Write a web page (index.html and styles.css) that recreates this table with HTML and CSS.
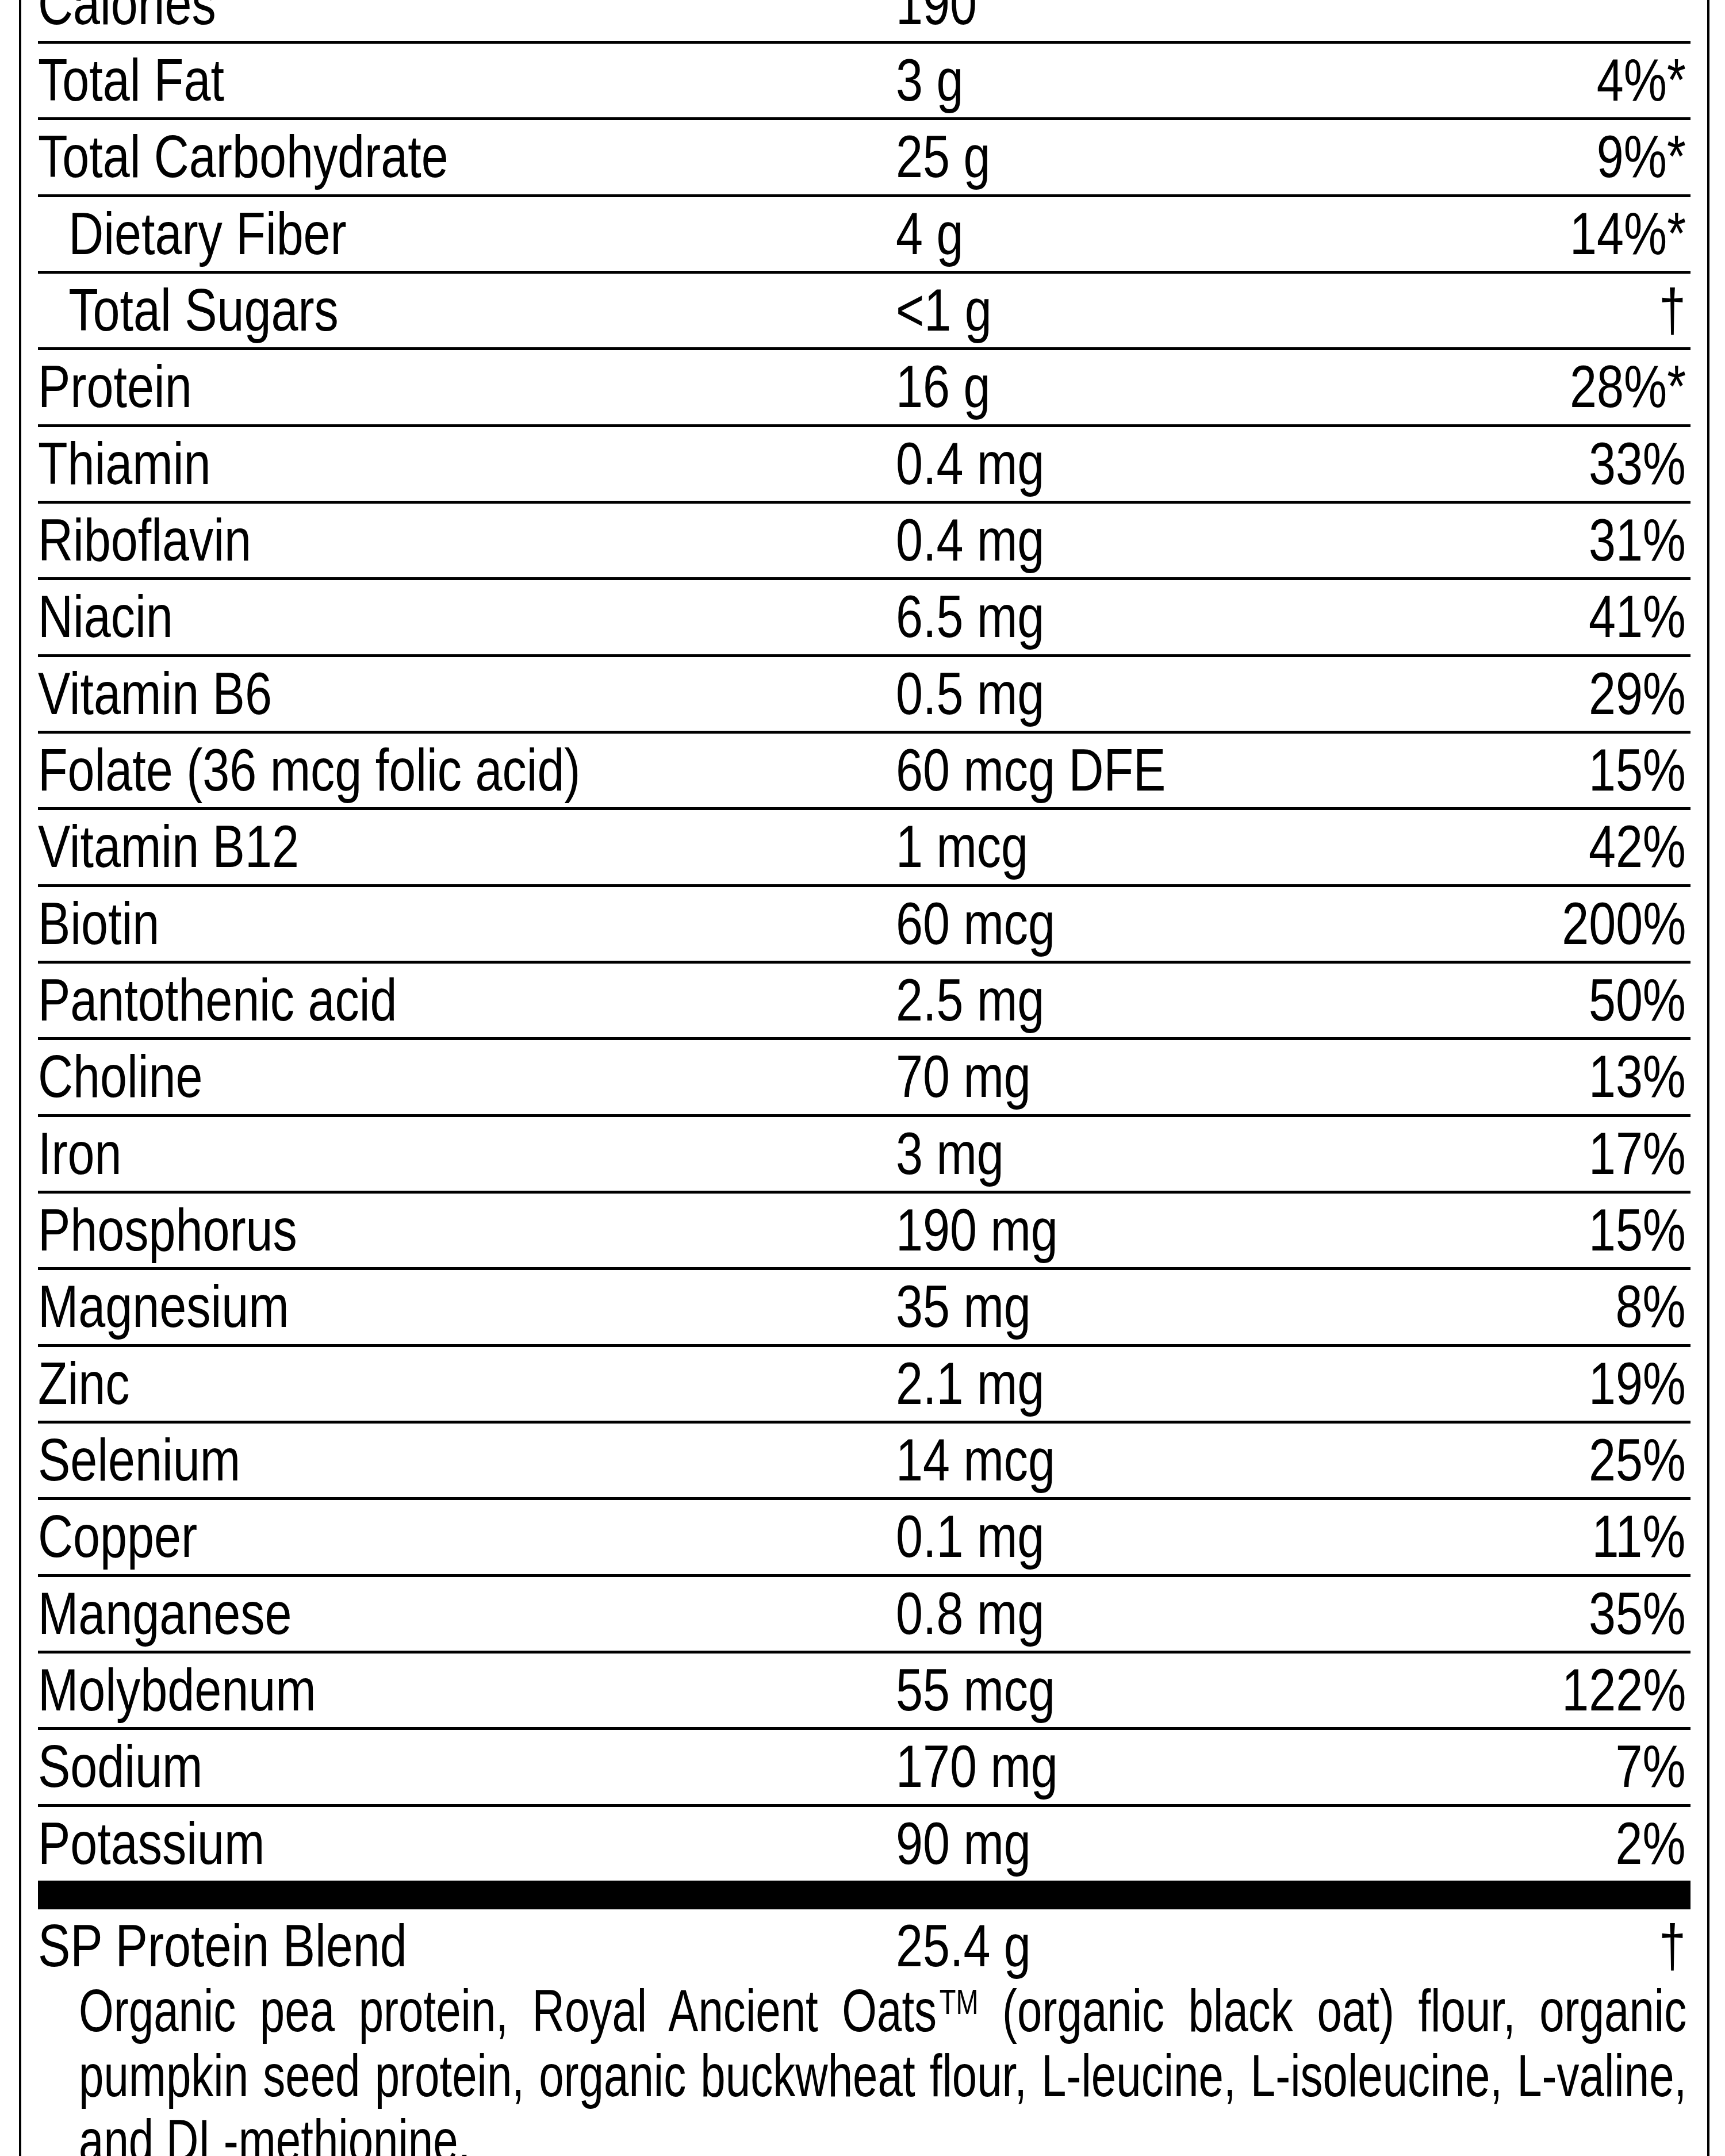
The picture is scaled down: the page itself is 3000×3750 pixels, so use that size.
FILE: index.html
```html
<!DOCTYPE html>
<html lang="en">
<head>
<meta charset="utf-8">
<title>Supplement Facts</title>
<link rel="stylesheet" href="styles.css">
</head>
<body>
<div class="label">
  <div class="row"><span class="name">Calories</span><span class="amt">190</span><span class="dv"></span></div>
  <div class="row"><span class="name">Total Fat</span><span class="amt">3 g</span><span class="dv">4%*</span></div>
  <div class="row"><span class="name">Total Carbohydrate</span><span class="amt">25 g</span><span class="dv">9%*</span></div>
  <div class="row"><span class="name sub">Dietary Fiber</span><span class="amt">4 g</span><span class="dv">14%*</span></div>
  <div class="row"><span class="name sub">Total Sugars</span><span class="amt">&lt;1 g</span><span class="dv">†</span></div>
  <div class="row"><span class="name">Protein</span><span class="amt">16 g</span><span class="dv">28%*</span></div>
  <div class="row"><span class="name">Thiamin</span><span class="amt">0.4 mg</span><span class="dv">33%</span></div>
  <div class="row"><span class="name">Riboflavin</span><span class="amt">0.4 mg</span><span class="dv">31%</span></div>
  <div class="row"><span class="name">Niacin</span><span class="amt">6.5 mg</span><span class="dv">41%</span></div>
  <div class="row"><span class="name">Vitamin B6</span><span class="amt">0.5 mg</span><span class="dv">29%</span></div>
  <div class="row"><span class="name">Folate (36 mcg folic acid)</span><span class="amt">60 mcg DFE</span><span class="dv">15%</span></div>
  <div class="row"><span class="name">Vitamin B12</span><span class="amt">1 mcg</span><span class="dv">42%</span></div>
  <div class="row"><span class="name">Biotin</span><span class="amt">60 mcg</span><span class="dv">200%</span></div>
  <div class="row"><span class="name">Pantothenic acid</span><span class="amt">2.5 mg</span><span class="dv">50%</span></div>
  <div class="row"><span class="name">Choline</span><span class="amt">70 mg</span><span class="dv">13%</span></div>
  <div class="row"><span class="name">Iron</span><span class="amt">3 mg</span><span class="dv">17%</span></div>
  <div class="row"><span class="name">Phosphorus</span><span class="amt">190 mg</span><span class="dv">15%</span></div>
  <div class="row"><span class="name">Magnesium</span><span class="amt">35 mg</span><span class="dv">8%</span></div>
  <div class="row"><span class="name">Zinc</span><span class="amt">2.1 mg</span><span class="dv">19%</span></div>
  <div class="row"><span class="name">Selenium</span><span class="amt">14 mcg</span><span class="dv">25%</span></div>
  <div class="row"><span class="name">Copper</span><span class="amt">0.1 mg</span><span class="dv">11%</span></div>
  <div class="row"><span class="name">Manganese</span><span class="amt">0.8 mg</span><span class="dv">35%</span></div>
  <div class="row"><span class="name">Molybdenum</span><span class="amt">55 mcg</span><span class="dv">122%</span></div>
  <div class="row"><span class="name">Sodium</span><span class="amt">170 mg</span><span class="dv">7%</span></div>
  <div class="row last"><span class="name">Potassium</span><span class="amt">90 mg</span><span class="dv">2%</span></div>
  <div class="bar"></div>
  <div class="row last"><span class="name">SP Protein Blend</span><span class="amt">25.4 g</span><span class="dv">†</span></div>
  <p class="ingredients">Organic pea protein, Royal Ancient Oats<span class="tm">TM</span> (organic black oat) flour, organic pumpkin seed protein, organic buckwheat flour, L-leucine, L&#8209;isoleucine, L&#8209;valine, and DL-methionine.</p>
</div>
</body>
</html>
```

FILE: styles.css
```css
html, body {
  margin: 0;
  padding: 0;
  background: #fff;
  overflow: hidden;
}

body {
  font-family: "Liberation Sans Narrow", "Arial Narrow", "Liberation Sans", Arial, sans-serif;
  color: #000;
}

.label {
  box-sizing: border-box;
  width: 2940px;
  margin: -57.333px 0 0 33px;
  padding: 0 29px;
  border-left: 4px solid #000;
  border-right: 4px solid #000;
  min-height: 3900px;
  font-size: 103px;
}

.row {
  display: grid;
  grid-template-columns: 1492px 1fr auto;
  height: 128.333px;
  line-height: 128.333px;
  border-bottom: 5px solid #000;
  white-space: nowrap;
}

.row.last {
  border-bottom: none;
}

.row > span {
  transform: scaleX(0.82);
  transform-origin: left center;
}

.name.sub {
  padding-left: 65px;
}

.row > .dv {
  text-align: right;
  padding-right: 10px;
  transform-origin: right center;
}

.bar {
  height: 50px;
  background: #000;
}

.ingredients {
  width: 3689px;
  margin: -8.5px 0 0 71px;
  line-height: 113px;
  text-align: justify;
  transform: scaleX(0.758);
  transform-origin: left top;
}

.tm {
  font-size: 62px;
  padding-left: 6px;
  vertical-align: 30px;
  line-height: 0;
}
```
